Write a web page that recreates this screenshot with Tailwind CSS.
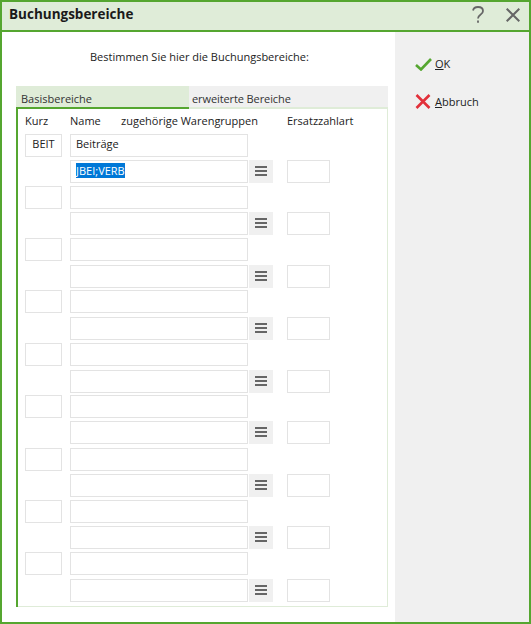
<!DOCTYPE html>
<html lang="de">
<head>
  <meta charset="UTF-8" />
  <title>Buchungsbereiche</title>
  <script src="https://cdn.jsdelivr.net/npm/@tailwindcss/browser@4"></script>
</head>
<body class="bg-white font-['Open_Sans',sans-serif] text-[11px] leading-[15px] text-[#222]">

  <div class="w-[531px] h-[624px] border-2 border-[#55a630] flex flex-col overflow-hidden">

    <!-- Titelleiste -->
    <div class="h-[30px] shrink-0 border-b-2 border-[#55a630] bg-[#dfecd8] flex items-center pl-[7px] pb-[3px]">
      <h1 class="text-[13.5px] font-bold text-[#1a1a1a]">Buchungsbereiche</h1>
      <svg class="ml-auto mr-[22px] w-[12px] h-[17px]" viewBox="0 0 12 17" fill="none" stroke="#666" stroke-width="1.8"><path d="M1 4.5C1.5 2 3.5 1 6 1c3 0 5 1.6 5 4 0 1.8-1 2.8-2.6 3.8C7 9.8 6 10.6 6 12.6"/><path d="M6 14.4v2.4"/></svg>
      <svg class="mr-[9px] w-[14px] h-[14px]" viewBox="0 0 14 14" fill="none" stroke="#666" stroke-width="2"><path d="M.7.7l12.6 12.6M13.3.7L.7 13.3"/></svg>
    </div>

    <div class="flex flex-1 min-h-0">
      <!-- Hauptbereich -->
      <div class="w-[393px] shrink-0 pl-[14px] pr-[7px]">
        <p class="pt-[17px] pl-[74px] h-[54px]">Bestimmen Sie hier die Buchungsbereiche:</p>

        <!-- Tabs -->
        <div class="flex h-[21px] bg-[#f0f0f0]">
          <div class="w-[173px] bg-[#dfecd8] pl-[5px] pt-[5px] text-[#333]">Basisbereiche</div>
          <div class="pl-[3px] pt-[5px] text-[#333] tracking-[-0.1px]">erweiterte Bereiche</div>
        </div>

        <!-- Panel -->
        <div class="relative h-[500px] border-2 border-l-[#55a630] border-t-[#dfecd8] border-r-0 border-b-0">
          <div class="absolute -left-[2px] -top-[2px] w-[173px] h-[2px] bg-[#55a630]"></div>
          <div class="absolute right-0 top-0 bottom-0 w-[1.5px] bg-[#dfecd8]"></div>
          <div class="absolute left-0 right-0 bottom-0 h-[1.5px] bg-[#dfecd8]"></div>

          <div class="flex h-[25px] pt-[4px] pl-[7px]">
            <span class="w-[45px]">Kurz</span>
            <span class="w-[51px]">Name</span>
            <span class="w-[166px]">zugehörige Warengruppen</span>
            <span>Ersatzzahlart</span>
          </div>

          <div class="pl-[7px]">
            <div class="flex gap-[8px]">
              <div class="w-[37px] h-[23px] border border-[#e3e3e3] text-center leading-[17px]">BEIT</div>
              <div class="w-[178px] h-[23px] border border-[#e3e3e3] pl-[5px] leading-[17px]">Beiträge</div>
            </div>
            <div class="flex mt-[3px] ml-[45px]">
              <div class="w-[178px] h-[23px] border border-[#e3e3e3] pl-[5px] pt-[2px]"><span class="block w-fit bg-[#0078d7] text-white leading-[15px]">JBEI;VERB</span></div>
              <div class="ml-[1px] w-[24px] h-[23px] pb-[1px] bg-[#f0f0f0] flex flex-col justify-center items-center gap-[2px]"><i class="w-[12px] h-[2px] bg-[#666]"></i><i class="w-[12px] h-[2px] bg-[#666]"></i><i class="w-[12px] h-[2px] bg-[#666]"></i></div>
              <div class="ml-[14px] w-[43px] h-[23px] border border-[#e3e3e3]"></div>
            </div>

            <!-- Leere Zeilen -->
            <div class="flex gap-[8px] mt-[3px]">
              <div class="w-[37px] h-[23px] border border-[#e3e3e3]"></div>
              <div class="w-[178px] h-[23px] border border-[#e3e3e3]"></div>
            </div>
            <div class="flex mt-[3px] ml-[45px]">
              <div class="w-[178px] h-[23px] border border-[#e3e3e3]"></div>
              <div class="ml-[1px] w-[24px] h-[23px] pb-[1px] bg-[#f0f0f0] flex flex-col justify-center items-center gap-[2px]"><i class="w-[12px] h-[2px] bg-[#666]"></i><i class="w-[12px] h-[2px] bg-[#666]"></i><i class="w-[12px] h-[2px] bg-[#666]"></i></div>
              <div class="ml-[14px] w-[43px] h-[23px] border border-[#e3e3e3]"></div>
            </div>

            <div class="flex gap-[8px] mt-[3px]">
              <div class="w-[37px] h-[23px] border border-[#e3e3e3]"></div>
              <div class="w-[178px] h-[23px] border border-[#e3e3e3]"></div>
            </div>
            <div class="flex mt-[4px] ml-[45px]">
              <div class="w-[178px] h-[23px] border border-[#e3e3e3]"></div>
              <div class="ml-[1px] w-[24px] h-[23px] pb-[1px] bg-[#f0f0f0] flex flex-col justify-center items-center gap-[2px]"><i class="w-[12px] h-[2px] bg-[#666]"></i><i class="w-[12px] h-[2px] bg-[#666]"></i><i class="w-[12px] h-[2px] bg-[#666]"></i></div>
              <div class="ml-[14px] w-[43px] h-[23px] border border-[#e3e3e3]"></div>
            </div>

            <div class="flex gap-[8px] mt-[2px]">
              <div class="w-[37px] h-[23px] border border-[#e3e3e3]"></div>
              <div class="w-[178px] h-[23px] border border-[#e3e3e3]"></div>
            </div>
            <div class="flex mt-[4px] ml-[45px]">
              <div class="w-[178px] h-[23px] border border-[#e3e3e3]"></div>
              <div class="ml-[1px] w-[24px] h-[23px] pb-[1px] bg-[#f0f0f0] flex flex-col justify-center items-center gap-[2px]"><i class="w-[12px] h-[2px] bg-[#666]"></i><i class="w-[12px] h-[2px] bg-[#666]"></i><i class="w-[12px] h-[2px] bg-[#666]"></i></div>
              <div class="ml-[14px] w-[43px] h-[23px] border border-[#e3e3e3]"></div>
            </div>

            <div class="flex gap-[8px] mt-[3px]">
              <div class="w-[37px] h-[23px] border border-[#e3e3e3]"></div>
              <div class="w-[178px] h-[23px] border border-[#e3e3e3]"></div>
            </div>
            <div class="flex mt-[4px] ml-[45px]">
              <div class="w-[178px] h-[23px] border border-[#e3e3e3]"></div>
              <div class="ml-[1px] w-[24px] h-[23px] pb-[1px] bg-[#f0f0f0] flex flex-col justify-center items-center gap-[2px]"><i class="w-[12px] h-[2px] bg-[#666]"></i><i class="w-[12px] h-[2px] bg-[#666]"></i><i class="w-[12px] h-[2px] bg-[#666]"></i></div>
              <div class="ml-[14px] w-[43px] h-[23px] border border-[#e3e3e3]"></div>
            </div>

            <div class="flex gap-[8px] mt-[2px]">
              <div class="w-[37px] h-[23px] border border-[#e3e3e3]"></div>
              <div class="w-[178px] h-[23px] border border-[#e3e3e3]"></div>
            </div>
            <div class="flex mt-[3px] ml-[45px]">
              <div class="w-[178px] h-[23px] border border-[#e3e3e3]"></div>
              <div class="ml-[1px] w-[24px] h-[23px] pb-[1px] bg-[#f0f0f0] flex flex-col justify-center items-center gap-[2px]"><i class="w-[12px] h-[2px] bg-[#666]"></i><i class="w-[12px] h-[2px] bg-[#666]"></i><i class="w-[12px] h-[2px] bg-[#666]"></i></div>
              <div class="ml-[14px] w-[43px] h-[23px] border border-[#e3e3e3]"></div>
            </div>

            <div class="flex gap-[8px] mt-[4px]">
              <div class="w-[37px] h-[23px] border border-[#e3e3e3]"></div>
              <div class="w-[178px] h-[23px] border border-[#e3e3e3]"></div>
            </div>
            <div class="flex mt-[3px] ml-[45px]">
              <div class="w-[178px] h-[23px] border border-[#e3e3e3]"></div>
              <div class="ml-[1px] w-[24px] h-[23px] pb-[1px] bg-[#f0f0f0] flex flex-col justify-center items-center gap-[2px]"><i class="w-[12px] h-[2px] bg-[#666]"></i><i class="w-[12px] h-[2px] bg-[#666]"></i><i class="w-[12px] h-[2px] bg-[#666]"></i></div>
              <div class="ml-[14px] w-[43px] h-[23px] border border-[#e3e3e3]"></div>
            </div>

            <div class="flex gap-[8px] mt-[3px]">
              <div class="w-[37px] h-[23px] border border-[#e3e3e3]"></div>
              <div class="w-[178px] h-[23px] border border-[#e3e3e3]"></div>
            </div>
            <div class="flex mt-[3px] ml-[45px]">
              <div class="w-[178px] h-[23px] border border-[#e3e3e3]"></div>
              <div class="ml-[1px] w-[24px] h-[23px] pb-[1px] bg-[#f0f0f0] flex flex-col justify-center items-center gap-[2px]"><i class="w-[12px] h-[2px] bg-[#666]"></i><i class="w-[12px] h-[2px] bg-[#666]"></i><i class="w-[12px] h-[2px] bg-[#666]"></i></div>
              <div class="ml-[14px] w-[43px] h-[23px] border border-[#e3e3e3]"></div>
            </div>

            <div class="flex gap-[8px] mt-[3px]">
              <div class="w-[37px] h-[23px] border border-[#e3e3e3]"></div>
              <div class="w-[178px] h-[23px] border border-[#e3e3e3]"></div>
            </div>
            <div class="flex mt-[4px] ml-[45px]">
              <div class="w-[178px] h-[23px] border border-[#e3e3e3]"></div>
              <div class="ml-[1px] w-[24px] h-[23px] pb-[1px] bg-[#f0f0f0] flex flex-col justify-center items-center gap-[2px]"><i class="w-[12px] h-[2px] bg-[#666]"></i><i class="w-[12px] h-[2px] bg-[#666]"></i><i class="w-[12px] h-[2px] bg-[#666]"></i></div>
              <div class="ml-[14px] w-[43px] h-[23px] border border-[#e3e3e3]"></div>
            </div>
          </div>
        </div>
      </div>

      <!-- Buttons -->
      <div class="w-[134px] shrink-0 bg-[#f0f0f0] pl-[20px] pt-[23px] text-[#222]">
        <div class="flex items-center h-[16px]">
          <svg class="w-[17px] h-[13px] mt-[2px]" viewBox="0 0 17 13" fill="none" stroke="#55a630" stroke-width="2.6"><path d="M1 7l5 4.5L16 1"/></svg>
          <span class="ml-[3px]"><u>O</u>K</span>
        </div>
        <div class="flex items-center h-[16px] mt-[22px]">
          <svg class="w-[16px] h-[15px] mt-[1px]" viewBox="0 0 16 15" fill="none" stroke="#e2303a" stroke-width="2.6"><path d="M1.5 1l13 13M14.5 1l-13 13"/></svg>
          <span class="ml-[4px]"><u>A</u>bbruch</span>
        </div>
      </div>
    </div>
  </div>

</body>
</html>
